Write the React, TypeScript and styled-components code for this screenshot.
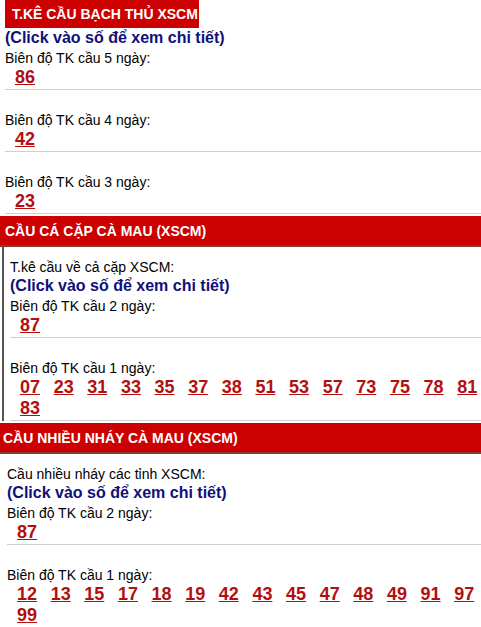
import React from "react";
import styled, { createGlobalStyle } from "styled-components";

const GlobalStyle = createGlobalStyle`
  body {
    margin: 0;
    background: #fff;
    font-family: "Liberation Sans", Arial, sans-serif;
  }
`;

const Page = styled.div`
  width: 481px;
  overflow: hidden;
`;

const Section = styled.section<{ $pad: number; $bordered?: boolean }>`
  padding-left: ${({ $pad }) => $pad}px;
  margin-left: ${({ $bordered }) => ($bordered ? 2 : 0)}px;
  border-left: ${({ $bordered }) => ($bordered ? "2px solid #555" : "none")};
`;

const TopTitle = styled.div`
  display: inline-block;
  vertical-align: top;
  margin-left: 5px;
  height: 28px;
  padding: 0 1px 0 7px;
  white-space: nowrap;
  background: #cc0000;
  color: #fff;
  font-weight: bold;
  font-size: 14px;
  line-height: 29px;
`;

const Title = styled.div<{ $pad: number }>`
  height: 29px;
  padding-left: ${({ $pad }) => $pad}px;
  white-space: nowrap;
  background: #cc0000;
  border-bottom: 2px solid #8c3535;
  color: #fff;
  font-weight: bold;
  font-size: 14px;
  line-height: 30px;
`;

const Intro = styled.div`
  padding-top: 12px;
  font-size: 14px;
  line-height: 17px;
  color: #000;
`;

const Note = styled.div`
  font-size: 16px;
  font-weight: bold;
  line-height: 20px;
  color: #10107a;
`;

const Item = styled.div<{ $gap: number }>`
  padding-top: ${({ $gap }) => $gap}px;
  border-bottom: 1px solid #cfcfcf;
`;

const Label = styled.div`
  font-size: 14px;
  line-height: 16px;
  color: #000;
`;

const Numbers = styled.div`
  display: flex;
  flex-wrap: wrap;
  column-gap: 13.6px;
  padding: 1px 0 1px 10px;
`;

const Num = styled.a`
  font-size: 18px;
  font-weight: bold;
  line-height: 21px;
  color: #b30f0f;
  text-decoration: underline;
  cursor: pointer;
`;

const SectionGap = styled.div<{ $h: number }>`
  height: ${({ $h }) => $h}px;
`;

type Stat = { label: string; nums: string[] };

const StatItem = ({ stat, gap }: { stat: Stat; gap: number }) => (
  <Item $gap={gap}>
    <Label>{stat.label}</Label>
    <Numbers>
      {stat.nums.map((n, i) => (
        <Num key={i}>{n}</Num>
      ))}
    </Numbers>
  </Item>
);

const bachThu: Stat[] = [
  { label: "Biên độ TK cầu 5 ngày:", nums: ["86"] },
  { label: "Biên độ TK cầu 4 ngày:", nums: ["42"] },
  { label: "Biên độ TK cầu 3 ngày:", nums: ["23"] },
];

const caCap: Stat[] = [
  { label: "Biên độ TK cầu 2 ngày:", nums: ["87"] },
  {
    label: "Biên độ TK cầu 1 ngày:",
    nums: ["07", "23", "31", "33", "35", "37", "38", "51", "53", "57", "73", "75", "78", "81", "83"],
  },
];

const nhieuNhay: Stat[] = [
  { label: "Biên độ TK cầu 2 ngày:", nums: ["87"] },
  {
    label: "Biên độ TK cầu 1 ngày:",
    nums: ["12", "13", "15", "17", "18", "19", "42", "43", "45", "47", "48", "49", "91", "97", "99"],
  },
];

export default function App() {
  return (
    <Page>
      <GlobalStyle />
      <TopTitle>T.KÊ CẦU BẠCH THỦ XSCM</TopTitle>
      <Section $pad={5}>
        <Note>(Click vào số để xem chi tiết)</Note>
        {bachThu.map((s, i) => (
          <StatItem key={i} stat={s} gap={i === 0 ? 2 : 22} />
        ))}
      </Section>

      <SectionGap $h={2} />
      <Title $pad={5}>CẦU CÁ CẶP CÀ MAU (XSCM)</Title>
      <Section $pad={6} $bordered>
        <Intro>T.kê cầu về cả cặp XSCM:</Intro>
        <Note>(Click vào số để xem chi tiết)</Note>
        {caCap.map((s, i) => (
          <StatItem key={i} stat={s} gap={i === 0 ? 2 : 22} />
        ))}
      </Section>

      <SectionGap $h={2} />
      <Title $pad={3}>CẦU NHIỀU NHÁY CÀ MAU (XSCM)</Title>
      <Section $pad={7}>
        <Intro>Cầu nhiều nháy các tỉnh XSCM:</Intro>
        <Note>(Click vào số để xem chi tiết)</Note>
        {nhieuNhay.map((s, i) => (
          <StatItem key={i} stat={s} gap={i === 0 ? 2 : 22} />
        ))}
      </Section>
    </Page>
  );
}
